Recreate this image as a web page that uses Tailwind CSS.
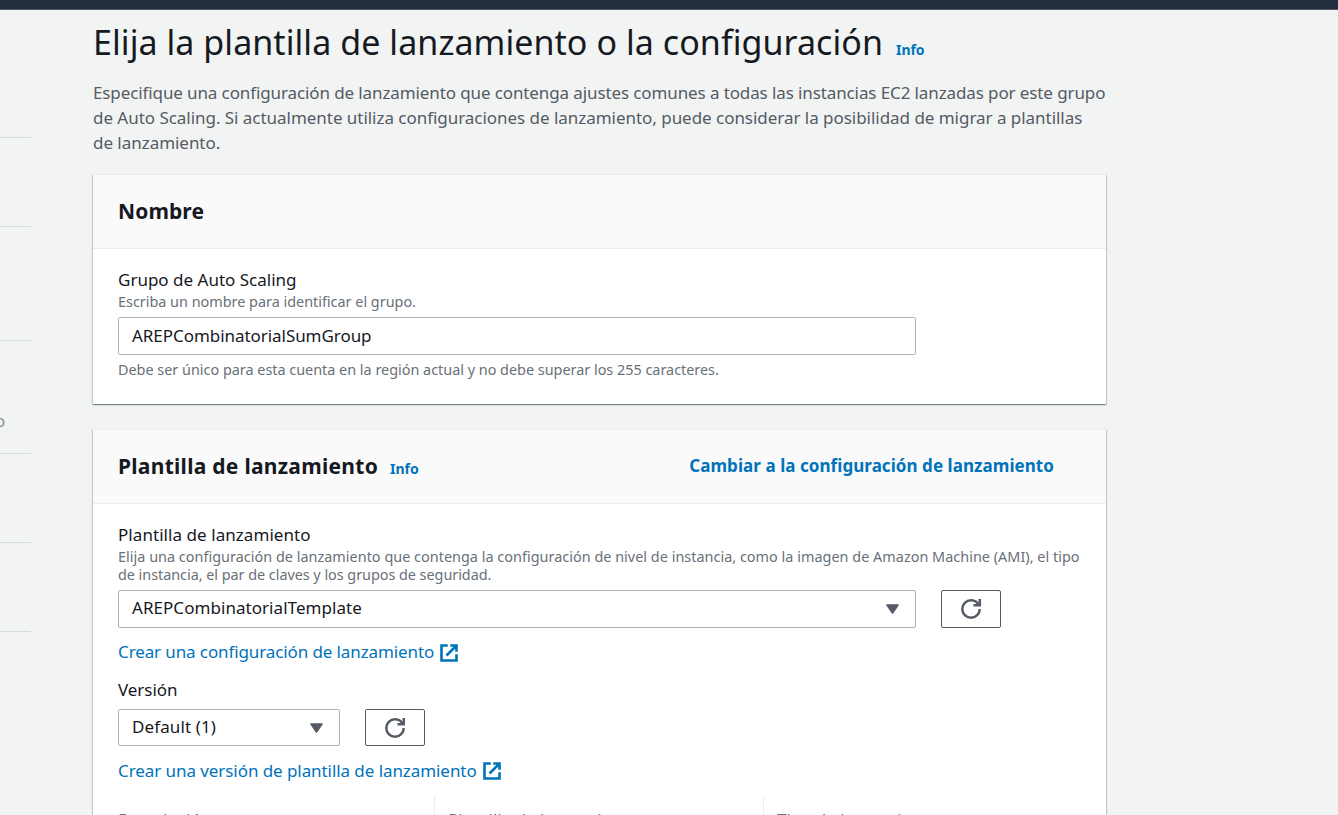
<!DOCTYPE html>
<html lang="es">
<head>
<meta charset="utf-8">
<title>Crear grupo de Auto Scaling</title>
<script src="https://cdn.jsdelivr.net/npm/@tailwindcss/browser@4"></script>
</head>
<body class="h-[815px] overflow-hidden bg-[#f2f3f3] font-['Noto_Sans','Open_Sans',sans-serif] text-[17px] tracking-[-0.05px] text-[#16191f]">
<svg class="hidden">
  <symbol id="refresh" viewBox="0 0 16 16"><g fill="none" stroke="currentColor" stroke-width="2"><path d="M10 5h5V0"/><path d="M15 8a7 7 0 0 1-14 0a7 7 0 0 1 7-7a6.87 6.87 0 0 1 6.3 4"/></g></symbol>
  <symbol id="external" viewBox="0 0 16 16"><g fill="none" stroke="currentColor" stroke-width="2.1"><path d="M9 2h5v5M6 10l8-8"/><path d="M14 9.05V14H2V2h5"/></g></symbol>
  <symbol id="caret" viewBox="0 0 13 10"><path d="M1 1h11L6.5 9z" fill="currentColor" stroke="currentColor" stroke-width="1.6" stroke-linejoin="round"/></symbol>
</svg>
<header class="h-[10px] border-b border-[#545b64] bg-[#232f3e]"></header>
<div class="flex h-[805px] whitespace-nowrap">
  <nav class="flex w-[31px] shrink-0 flex-col overflow-hidden text-[#879596]">
    <div class="h-[128px] shrink-0 border-b border-[#d5dbdb]"></div>
    <div class="h-[89px] shrink-0 border-b border-[#d5dbdb]"></div>
    <div class="h-[114px] shrink-0 border-b border-[#d5dbdb]"></div>
    <div class="flex h-[113px] shrink-0 items-end border-b border-[#d5dbdb] pb-[20px]"><span class="-ml-[5px] leading-6">o</span></div>
    <div class="h-[89px] shrink-0 border-b border-[#d5dbdb]"></div>
    <div class="h-[89px] shrink-0 border-b border-[#d5dbdb]"></div>
  </nav>
  <main class="ml-[62px] w-[1013px] shrink-0">
    <h1 class="flex h-[70px] items-baseline pt-[8px]">
      <span class="text-[34px] leading-[48px] tracking-[0.06px]">Elija la plantilla de lanzamiento o la configuración</span>
      <a class="ml-[13px] text-[14px] font-bold text-[#0073bb]">Info</a>
    </h1>
    <div class="h-[94px] leading-[25px] tracking-[-0.11px] text-[#545b64]">
      <p>Especifique una configuración de lanzamiento que contenga ajustes comunes a todas las instancias EC2 lanzadas por este grupo</p>
      <p class="tracking-[-0.035px]">de Auto Scaling. Si actualmente utiliza configuraciones de lanzamiento, puede considerar la posibilidad de migrar a plantillas</p>
      <p class="tracking-[-0.035px]">de lanzamiento.</p>
    </div>
    <section class="h-[230px] bg-white shadow-[0_1px_1px_0_rgba(0,28,36,0.3),1px_1px_1px_0_rgba(0,28,36,0.15),-1px_1px_1px_0_rgba(0,28,36,0.15)]">
      <div class="flex h-[75px] items-center border-y border-[#eaeded] bg-[#fafafa] px-[25px]">
        <h2 class="text-[21px] font-bold tracking-[0.1px]">Nombre</h2>
      </div>
      <div class="px-[25px] pt-[19px]">
        <label class="block h-[24px] leading-[23px] tracking-normal">Grupo de Auto Scaling</label>
        <p class="h-[25px] text-[14.4px] leading-[19px] tracking-normal text-[#687078]">Escriba un nombre para identificar el grupo.</p>
        <div class="flex h-[38px] w-[798px] items-center rounded-[2px] border border-[#aab7b8] px-[13px]">AREPCombinatorialSumGroup</div>
        <p class="mt-[6px] text-[14.4px] leading-[18px] tracking-normal text-[#687078]">Debe ser único para esta cuenta en la región actual y no debe superar los 255 caracteres.</p>
      </div>
    </section>
    <section class="mt-[25px] h-[386px] overflow-hidden bg-white shadow-[0_1px_1px_0_rgba(0,28,36,0.3),1px_1px_1px_0_rgba(0,28,36,0.15),-1px_1px_1px_0_rgba(0,28,36,0.15)]">
      <div class="flex h-[75px] items-center justify-between border-y border-[#eaeded] bg-[#fafafa] pl-[25px] pr-[52px]">
        <h2 class="flex items-baseline"><span class="text-[21px] font-bold tracking-[0.28px]">Plantilla de lanzamiento</span><a class="ml-[12px] text-[14px] font-bold text-[#0073bb]">Info</a></h2>
        <a class="pb-[2px] font-bold tracking-[0.06px] text-[#0073bb]">Cambiar a la configuración de lanzamiento</a>
      </div>
      <div class="px-[25px] pt-[19px]">
        <label class="block h-[25px] leading-[23px] tracking-[0.06px]">Plantilla de lanzamiento</label>
        <div class="h-[42px] text-[14.4px] leading-[18px] tracking-[0.03px] text-[#687078]">
          <p>Elija una configuración de lanzamiento que contenga la configuración de nivel de instancia, como la imagen de Amazon Machine (AMI), el tipo</p>
          <p class="tracking-[-0.03px]">de instancia, el par de claves y los grupos de seguridad.</p>
        </div>
        <div class="flex gap-[25px]">
          <div class="flex h-[38px] w-[798px] items-center justify-between rounded-[2px] border border-[#aab7b8] pl-[13px] pr-[16px]"><span class="pb-[2px] tracking-[0.05px]">AREPCombinatorialTemplate</span><svg class="h-[10px] w-[13px] text-[#545b64]"><use href="#caret"/></svg></div>
          <button class="flex h-[38px] w-[60px] items-center justify-center rounded-[2px] border border-[#545b64] text-[#545b64]"><svg class="h-5 w-5"><use href="#refresh"/></svg></button>
        </div>
        <a class="mt-[12px] flex h-[25px] items-center gap-[5px] text-[#0073bb]"><span class="pb-px tracking-[-0.11px]">Crear una configuración de lanzamiento</span><svg class="h-5 w-5"><use href="#external"/></svg></a>
        <label class="mt-[12px] block h-[32px] leading-[25px]">Versión</label>
        <div class="flex gap-[25px]">
          <div class="flex h-[37px] w-[222px] items-center justify-between rounded-[2px] border border-[#aab7b8] pl-[13px] pr-[16px]"><span class="pb-px tracking-[0.12px]">Default (1)</span><svg class="h-[10px] w-[13px] text-[#545b64]"><use href="#caret"/></svg></div>
          <button class="flex h-[37px] w-[60px] items-center justify-center rounded-[2px] border border-[#545b64] text-[#545b64]"><svg class="h-5 w-5"><use href="#refresh"/></svg></button>
        </div>
        <a class="mt-[12px] flex h-[25px] items-center gap-[5px] text-[#0073bb]"><span class="tracking-[-0.07px]">Crear una versión de plantilla de lanzamiento</span><svg class="h-5 w-5"><use href="#external"/></svg></a>
        <div class="mt-[13px] flex h-[60px] leading-[25px] text-[#687078]">
          <div class="w-[316px] pt-[11px]">Descripción</div>
          <div class="w-[329px] border-l border-[#eaeded] pl-[13px] pt-[11px]">Plantilla de lanzamiento</div>
          <div class="flex-1 border-l border-[#eaeded] pl-[13px] pt-[11px]">Tipo de instancia</div>
        </div>
      </div>
    </section>
  </main>
</div>
</body>
</html>
